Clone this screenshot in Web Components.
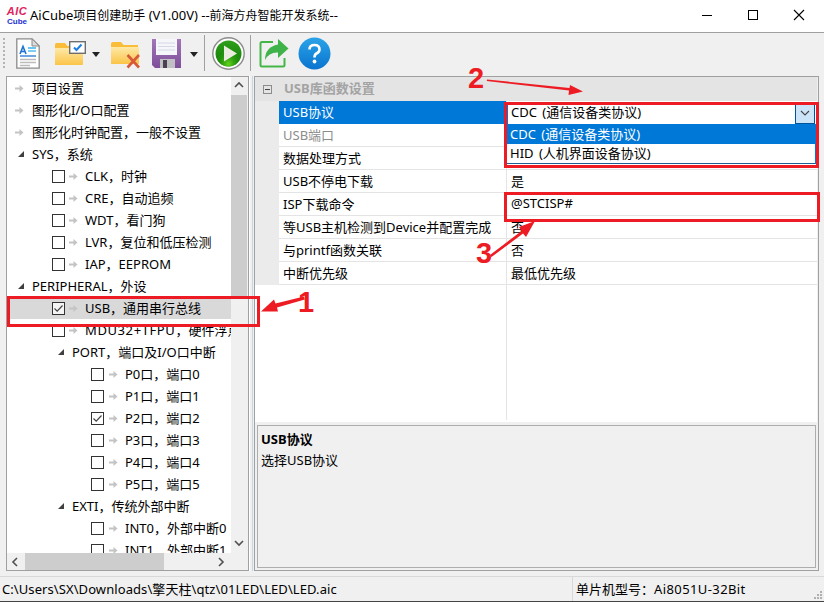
<!DOCTYPE html>
<html lang="zh"><head><meta charset="utf-8"><title>AiCube</title>
<style>
html,body{margin:0;padding:0;background:#f0f0f0;overflow:hidden}
body{width:824px;height:602px;font:13px "Noto Sans","Noto Sans CJK SC",sans-serif;color:#000}
</style></head><body>
<app-window>
  <title-bar slot="title">AiCube<span style="font-size:12px">项目创建助手</span> (V1.00V) --<span style="font-size:12px">前海方舟智能开发系统</span>--</title-bar>
  <tool-bar slot="tools"></tool-bar>
  <tree-panel slot="tree">
    <tree-row kind="leaf">项目设置</tree-row>
    <tree-row kind="leaf">图形化I/O口配置</tree-row>
    <tree-row kind="leaf">图形化时钟配置，一般不设置</tree-row>
    <tree-row kind="branch">SYS，系统</tree-row>
    <tree-row kind="check">CLK，时钟</tree-row>
    <tree-row kind="check">CRE，自动追频</tree-row>
    <tree-row kind="check">WDT，看门狗</tree-row>
    <tree-row kind="check">LVR，复位和低压检测</tree-row>
    <tree-row kind="check">IAP，EEPROM</tree-row>
    <tree-row kind="branch">PERIPHERAL，外设</tree-row>
    <tree-row kind="check" checked selected>USB，通用串行总线</tree-row>
    <tree-row kind="check"><span style="letter-spacing:.6px">MDU32+TFPU</span>，硬件浮点运算</tree-row>
    <tree-row kind="branch" level="1">PORT，端口及I/O口中断</tree-row>
    <tree-row kind="check" level="1">P0口，端口0</tree-row>
    <tree-row kind="check" level="1">P1口，端口1</tree-row>
    <tree-row kind="check" level="1" checked>P2口，端口2</tree-row>
    <tree-row kind="check" level="1">P3口，端口3</tree-row>
    <tree-row kind="check" level="1">P4口，端口4</tree-row>
    <tree-row kind="check" level="1">P5口，端口5</tree-row>
    <tree-row kind="branch" level="1">EXTI，传统外部中断</tree-row>
    <tree-row kind="check" level="1">INT0，外部中断0</tree-row>
    <tree-row kind="check" level="1">INT1，外部中断1</tree-row>
  </tree-panel>
  <prop-panel slot="props">
    <prop-row selected><span>USB协议</span></prop-row>
    <prop-row disabled><span>USB端口</span></prop-row>
    <prop-row><span>数据处理方式</span></prop-row>
    <prop-row><span>USB不停电下载</span><span slot="value">是</span></prop-row>
    <prop-row><span>ISP下载命令</span><span slot="value">@STCISP#</span></prop-row>
    <prop-row><span>等USB主机检测到Device并配置完成</span><span slot="value">否</span></prop-row>
    <prop-row><span>与printf函数关联</span><span slot="value">否</span></prop-row>
    <prop-row><span>中断优先级</span><span slot="value">最低优先级</span></prop-row>
  </prop-panel>
  <status-bar slot="status"></status-bar>
  <call-outs slot="overlay"></call-outs>
</app-window>
<script>
function def(name, css, html, init){
  customElements.define(name, class extends HTMLElement{
    connectedCallback(){
      if(this.shadowRoot) return;
      const r=this.attachShadow({mode:'open'});
      r.innerHTML='<style>'+css+'</style>'+(typeof html==='function'?html(this):html);
      if(init) init(r,this);
    }
  });
}
const chev=(d)=>{const p={u:'M1 6 L5 2 L9 6',d:'M1 2 L5 6 L9 2',l:'M6 1 L2 5 L6 9',r:'M2 1 L6 5 L2 9'}[d];
  return `<svg width="10" height="10" viewBox="0 0 10 10"><path d="${p}" fill="none" stroke="#505050" stroke-width="1.6"/></svg>`};

def('app-window',`
  :host{display:grid;position:relative;width:824px;height:602px;grid-template-rows:33px 42px 497px 30px;background:#f0f0f0;overflow:hidden}
  .main{display:flex;padding:1px 0 1px 6px;box-sizing:border-box;height:497px}
  .split{width:5px;box-sizing:border-box;border-left:1px solid #fff;margin:0;display:flex;justify-content:center}
  .split i{display:block;width:1px;margin-left:0;background:#c9d6e2}
  ::slotted([slot=overlay]){position:absolute;left:0;top:0}
`,`<slot name="title"></slot><slot name="tools"></slot>
  <div class="main"><slot name="tree"></slot><div class="split"><i></i></div><slot name="props"></slot></div>
  <slot name="status"></slot><slot name="overlay"></slot>`);

def('title-bar',`
  :host{display:flex;align-items:center;height:33px;box-sizing:border-box;background:#fff;border-bottom:1px solid #a0a0a0;font-size:13px;white-space:nowrap}
  .logo{width:22px;margin:0 0 2px 6px;display:flex;flex-direction:column;align-items:center;font-family:"Liberation Sans",sans-serif;font-weight:700;flex:none}
  .a{color:#e0245e;font-size:11px;font-style:italic;letter-spacing:.5px}
  .b{color:#1a2fd0;font-size:8px}
  .t{flex:1;padding:0 0 3px 2px}
  .btns{display:flex;margin:0 2px 2px 0}
  .btns div{width:46px;height:30px;display:flex;align-items:center;justify-content:center}
`,`<div class="logo"><span class="a">AIC</span><span class="b">Cube</span></div><div class="t"><slot></slot></div>
  <div class="btns">
   <div><svg width="12" height="12"><path d="M1 6.500H11" stroke="#000"/></svg></div>
   <div><svg width="12" height="12"><rect x="1.500" y="1.500" width="9" height="9" fill="none" stroke="#000"/></svg></div>
   <div><svg width="12" height="12"><path d="M1 1L11 11M11 1L1 11" stroke="#000" stroke-width="1.100"/></svg></div>
  </div>`);

def('tool-bar',`
  :host{display:flex;align-items:center;height:42px;box-sizing:border-box;background:#f0f0f0;padding-bottom:2px;position:relative}
  .grip{width:2px;height:30px;margin-left:3px;background:repeating-linear-gradient(#b4b4b4 0 2px,transparent 2px 4px)}
  svg{display:block;flex:none}
  .sep{width:1px;height:36px;background:#a0a0a0;flex:none}
  .dd{width:0;height:0;border:4px solid transparent;border-top:5px solid #222;border-bottom:0;flex:none}
`,`<div class="grip"></div>
  <svg style="margin-left:11px" width="24" height="31" viewBox="0 0 24 31">
    <path d="M.8.8H16L23.2 8V30.2H.8Z" fill="#fff" stroke="#8a8a8a" stroke-width="1.3"/><path d="M16 .8V8H23.2Z" fill="#dcdcdc" stroke="#8a8a8a"/>
    <path d="M4 16L7 8.500L10 16M5.200 13.500H8.800" fill="none" stroke="#1f74d2" stroke-width="1.600"/>
    <path d="M12 10H20" stroke="#35b4ee" stroke-width="1.500"/><path d="M12 13H20" stroke="#35b4ee" stroke-width="1.300"/><path d="M4 18H20" stroke="#1f74d2" stroke-width="1.300"/>
    <path d="M4 21.500H20M4 24.500H20M4 27.500H14" stroke="#bbb" stroke-width="1.300"/>
  </svg>
  <svg style="margin-left:15px" width="31" height="26" viewBox="0 0 31 26">
    <defs><linearGradient id="f" x1="0" y1="0" x2="0" y2="1"><stop offset="0" stop-color="#fde9a8"/><stop offset="1" stop-color="#fbc447"/></linearGradient></defs>
    <path d="M0 4.500Q0 3 1.500 3H10L12.500 6H26V24Q26 25 25 25H1Q0 25 0 24Z" fill="#f9bd3a"/><path d="M0 8H28V24Q28 25 27 25H1Q0 25 0 24Z" fill="url(#f)"/>
    <rect x="14.700" y="1.700" width="15.600" height="11.600" fill="#fff" stroke="#6e6e6e" stroke-width="1.400"/>
    <path d="M19 7.500L21.500 10L26.500 4.500" fill="none" stroke="#1f7fe0" stroke-width="2"/>
  </svg>
  <div class="dd" style="margin-left:6px;margin-top:3px"></div>
  <svg style="margin-left:11px;margin-top:4px" width="30" height="29" viewBox="0 0 30 29">
    <path d="M0 3Q0 1 2 1H10L12.500 4H27V23H1Q0 23 0 22Z" fill="#f9bd3a"/><path d="M0 6H28V22Q28 23 27 23H1Q0 23 0 22Z" fill="url(#f)"/>
    <path d="M16.500 14L28 26.500M28 14L16.500 26.500" stroke="#d8593a" stroke-width="2.600"/>
  </svg>
  <svg style="margin-left:10px" width="31" height="31" viewBox="0 0 31 31">
    <defs><linearGradient id="p" x1="0" y1="0" x2="0" y2="1"><stop offset="0" stop-color="#a276b8"/><stop offset="1" stop-color="#7e4f9a"/></linearGradient></defs>
    <path d="M1 1H30V30H4L1 27Z" fill="url(#p)"/>
    <rect x="5" y="1" width="21" height="16" fill="#f5f6fa"/><path d="M7 5H24M7 8.500H24M7 12H24" stroke="#d5d8e6"/>
    <path d="M9 30V21H24V30Z" fill="#bfbfc4"/><rect x="12" y="22" width="4" height="8" fill="#4a4150"/>
  </svg>
  <div class="dd" style="margin-left:8px;margin-top:3px"></div>
  <div class="sep" style="margin-left:6px"></div>
  <svg style="margin-left:7px" width="33" height="33" viewBox="0 0 33 33">
    <defs><linearGradient id="g" x1="0" y1="0" x2="0" y2="1"><stop offset="0" stop-color="#2f9f1c"/><stop offset="1" stop-color="#0f7a04"/></linearGradient>
    <radialGradient id="g2" cx=".5" cy=".9" r=".6"><stop offset="0" stop-color="#66d61e"/><stop offset="1" stop-color="#118a06" stop-opacity="0"/></radialGradient></defs>
    <circle cx="16.500" cy="16.500" r="15.700" fill="#fff" stroke="#8c8c8c" stroke-width="1.400"/>
    <circle cx="16.500" cy="16.500" r="13" fill="url(#g)"/><circle cx="16.500" cy="16.500" r="13" fill="url(#g2)"/>
    <path d="M12 8.500L25 16.500L12 24.500Z" fill="#e9ecdf"/>
  </svg>
  <div class="sep" style="margin-left:5px"></div>
  <svg style="margin-left:8px" width="30" height="30" viewBox="0 0 30 30">
    <path d="M14 4H3Q1.500 4 1.500 5.500V27Q1.500 28.500 3 28.500H24Q25.500 28.500 25.500 27V20" fill="none" stroke="#46b548" stroke-width="2"/>
    <path d="M19 1L29.500 10.500L19 20V14.500Q10 14 6 22Q6 9 19 6.500Z" fill="#3fb24a"/>
  </svg>
  <svg style="margin-left:9px" width="33" height="33" viewBox="0 0 33 33">
    <defs><linearGradient id="h" x1="0" y1="0" x2="0" y2="1"><stop offset="0" stop-color="#2aa3e8"/><stop offset="1" stop-color="#0a74cf"/></linearGradient></defs>
    <circle cx="16.500" cy="16.500" r="16" fill="url(#h)"/>
    <path d="M11.500 12.500Q11.500 8 16.500 8Q21.500 8 21.500 12.500Q21.500 15 18.500 16.500Q16.500 17.500 16.500 20.500" fill="none" stroke="#fff" stroke-width="2.600"/>
    <circle cx="16.500" cy="24.500" r="1.900" fill="#fff"/>
  </svg>`);

def('tree-panel',`
  :host{display:grid;grid-template-columns:224px 16px;grid-template-rows:476px 17px;width:243px;height:495px;box-sizing:border-box;border:1px solid #a0a0a0;padding-right:1px;background:#f0f0f0;flex:none}
  .view{background:#fff;overflow:hidden;box-sizing:border-box}
  .v{display:flex;flex-direction:column;align-items:center;background:#f0f0f0}
  .v span,.h span{display:flex;align-items:center;justify-content:center;flex:none}
  .v span{height:18px;width:16px}
  .v b{display:block;width:16px;height:201px;background:#cdcdcd}
  .v i{flex:1}
  .h{display:flex;align-items:center;background:#f0f0f0}
  .h span{width:18px;height:17px}
  .h b{display:block;width:139px;height:17px;background:#cdcdcd}
  .h i{flex:1}
`,`<div class="view"><slot></slot></div>
  <div class="v"><span>${chev('u')}</span><b></b><i></i><span>${chev('d')}</span></div>
  <div class="h"><span>${chev('l')}</span><b></b><i></i><span>${chev('r')}</span></div>
  <div style="background:#f0f0f0"></div>`);

const arrow='<svg class="ar" width="9" height="9" viewBox="0 0 9 9"><path d="M0 3.500H4.500V1L8.500 4.500L4.500 8V5.500H0Z" fill="#c4c4c4"/></svg>';
def('tree-row',`
  :host{display:flex;align-items:center;height:22px;white-space:nowrap;width:224px;overflow:hidden}
  :host([selected]){background:#d9d9d9}
  svg{flex:none;display:block}
  .ind{flex:none}
  .cb{width:13px;height:13px;box-sizing:border-box;border:1px solid #333;background:#fff;flex:none;display:flex;align-items:center;justify-content:center}
  :host([selected]) .cb{background:#f4f4f4}
  .tx{flex:none;padding-bottom:2px}
`,(h)=>{
  const k=h.getAttribute('kind'),l=+(h.getAttribute('level')||0),ck=h.hasAttribute('checked');
  if(k==='leaf') return `<div class="ind" style="width:8px"></div>${arrow}<div class="ind" style="width:8px"></div><div class="tx"><slot></slot></div>`;
  const tri=`<svg width="6" height="6" viewBox="0 0 6 6"><path d="M6 0V6H0Z" fill="#404040"/></svg>`;
  if(k==='branch') return `<div class="ind" style="width:${l?51:11}px"></div>${tri}<div class="ind" style="width:8px"></div><div class="tx"><slot></slot></div>`;
  const tick=ck?'<svg width="11" height="11" viewBox="0 0 11 11"><path d="M1.500 5.500L4.200 8.200L9.500 2.500" fill="none" stroke="#444" stroke-width="1.200"/></svg>':'';
  return `<div class="ind" style="width:${l?84:45}px"></div><div class="cb">${tick}</div><div class="ind" style="width:${l?5:4}px"></div>${arrow}<div class="ind" style="width:7px"></div><div class="tx"><slot></slot></div>`;
});

def('prop-panel',`
  :host{display:flex;flex-direction:column;width:565px;height:495px;box-sizing:border-box;border:1px solid #a0a0a0;flex:none;background:#f0f0f0;position:relative}
  .grid{height:345px;background:#fff;display:flex;flex-direction:column;width:562px;position:relative}
  .head{height:24px;flex:none;background:#e4e4e4;display:flex;align-items:center;color:#a3a3a3;font-weight:700;box-sizing:border-box}
  .head span{padding-bottom:3px}
  .mn{width:9px;height:9px;box-sizing:border-box;border:1px solid #8c8c8c;margin:0 12px 0 8px;position:relative;flex:none}
  .mn:after{content:"";position:absolute;left:1px;right:1px;top:3px;height:1px;background:#444}
  .fill{flex:1;display:flex;justify-content:flex-start;padding-left:251px}
  .fill i{display:block;width:1px;background:#e4e4e4;height:135px}
  .help{margin:3px 0 0 2px;width:559px;height:143px;box-sizing:border-box;border:1px solid #adadad;background:#f0f0f0;padding:3px 3px;line-height:21px}
  .help b{display:block}
  .combo{position:absolute;left:252px;top:25px;width:309px;height:22px;background:#fff;display:flex;align-items:center;box-sizing:border-box;padding-left:3px;border-left:1px solid #0078d7}
  .combo span{flex:1;padding-bottom:3px;word-spacing:2px}
  .btn{width:20px;height:21px;box-sizing:border-box;border:1px solid #005499;background:#cce4f7;display:flex;align-items:center;justify-content:center;margin-right:1px}
  .pop{position:absolute;left:251px;top:47px;width:310px;height:40px;box-sizing:border-box;background:#fff;border:1px solid #0078d7;border-top:0;border-bottom-color:#1c5f93}
  .pop div{height:20px;line-height:20px;padding-left:3px;box-sizing:border-box;word-spacing:2px}
  .pop div+div{line-height:19px}
  .pop .s{background:#0078d7;color:#fff}
`,`<div class="grid">
    <div class="head"><div class="mn"></div><span>USB库函数设置</span></div>
    <slot></slot>
    <div class="fill"><i></i></div>
    <div class="combo"><span>CDC (通信设备类协议)</span><div class="btn"><svg width="10" height="10" viewBox="0 0 10 10"><path d="M1 3L5 7L9 3" fill="none" stroke="#444" stroke-width="1.100"/></svg></div></div>
    <div class="pop"><div class="s">CDC (通信设备类协议)</div><div>HID (人机界面设备协议)</div></div>
  </div>
  <div class="help"><b>USB协议</b>选择USB协议</div>`);

def('prop-row',`
  :host{display:grid;grid-template-columns:24px 227px 1px 310px;height:23px;flex:none;box-sizing:border-box;white-space:nowrap}
  .g{background:#ebebeb}
  .n,.v{border-bottom:1px solid #e4e4e4;display:flex;align-items:center;padding:0 0 2px 4px;box-sizing:border-box;overflow:hidden}
  .d{background:#e4e4e4}
  :host([selected]) .n{background:#0078d7;color:#fff;border-bottom-color:#0078d7}
  :host([disabled]) .n{color:#8c8c8c}
`,`<div class="g"></div><div class="n"><slot></slot></div><div class="d"></div><div class="v"><slot name="value"></slot></div>`);

def('status-bar',`
  :host{display:flex;height:30px;box-sizing:border-box;margin-top:0;padding-top:4px;background:#f0f0f0;position:relative}
  .in{flex:1;display:flex;border-top:1px solid #d8d8d8;border-bottom:1px solid #444;box-sizing:border-box;height:26px}
  .p{width:572px;padding-left:2px;box-sizing:border-box;line-height:25px;white-space:nowrap;overflow:hidden;letter-spacing:.08px}
  .m{flex:1;border-left:1px solid #d8d8d8;padding-left:3px;line-height:25px;white-space:nowrap}
  .m span{letter-spacing:.4px}
  svg{position:absolute;right:1px;bottom:2px}
`,`<div class="in"><div class="p">C:\\Users\\SX\\Downloads\\擎天柱\\qtz\\01LED\\LED\\LED.aic</div><div class="m">单片机型号：<span>Ai8051U-32Bit</span></div></div>
  <svg width="10" height="10" viewBox="0 0 10 10" fill="#b0b0b0"><rect x="7" y="1" width="2" height="2"/><rect x="4" y="4" width="2" height="2"/><rect x="7" y="4" width="2" height="2"/><rect x="1" y="7" width="2" height="2"/><rect x="4" y="7" width="2" height="2"/><rect x="7" y="7" width="2" height="2"/></svg>`);

def('call-outs',`
  :host{display:block;width:824px;height:602px;pointer-events:none}
  svg{display:block}
  text{font:700 29px "Liberation Sans",sans-serif;fill:#ed1c24}
`,`<svg width="824" height="602" viewBox="0 0 824 602">
  <g fill="none" stroke="#ed1c24" stroke-width="3">
    <rect x="8.500" y="297.500" width="250" height="28"/>
    <rect x="505.500" y="103.500" width="312" height="63"/>
    <rect x="505.500" y="193.500" width="313" height="27"/>
  </g>
  <g fill="#ed1c24">
    <path d="M304 296.500L304.800 299.500L277 307.500L278 311.500L261 311.500L274 299.500L275.500 303.500Z"/>
    <path d="M487 79.500L486.800 81L569 90.500L568.500 95L583 91.500L570 85L569.500 88Z"/>
    <path d="M490 255L491.500 257L523 233.500L526 237L535 221L519 227L521.500 231Z"/>
  </g>
  <text x="298" y="312">1</text>
  <text x="468" y="88">2</text>
  <text x="476" y="263">3</text>
</svg>`);
</script>
</body></html>
